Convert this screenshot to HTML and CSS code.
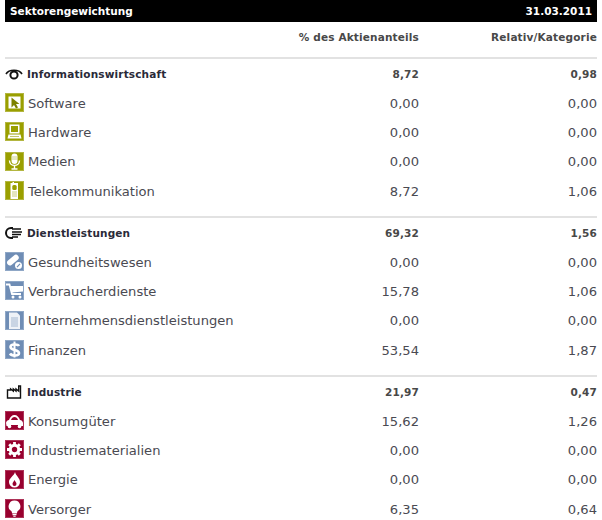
FILE: index.html
```html
<!DOCTYPE html>
<html lang="de">
<head>
<meta charset="utf-8">
<title>Sektorengewichtung</title>
<link rel="stylesheet" href="styles.css">
</head>
<body>
<svg width="0" height="0" class="defs">
  <symbol id="i-software" viewBox="0 0 19 19"><path d="M3.500 3.500h12v12h-12z" fill="#fff"/><path d="M6.500 4.500v10l2.500-2.500 2 3.500 2-1-2-3.500h3.500z" fill="#7d8100"/></symbol>
  <symbol id="i-hardware" viewBox="0 0 19 19"><path d="M4.500 2.500h10v9h-10z" fill="#fff"/><path d="M6 4h7v6H6z" fill="#9a9f00"/><path d="M3.500 12.500h12l1 4h-14z" fill="#fff"/><path d="M5 14.500h9" stroke="#c3c66a"/></symbol>
  <symbol id="i-medien" viewBox="0 0 19 19"><rect x="6.500" y="1.500" width="6" height="10.500" rx="3" fill="#fff"/><path d="M7 5h5M7 7h5" stroke="#c3c66a" stroke-width=".8"/><path d="M4.500 8.500c0 6.500 10 6.500 10 0M9.500 13.500v3M6.500 17h6" stroke="#fff" stroke-width="1.400" fill="none"/></symbol>
  <symbol id="i-telekom" viewBox="0 0 19 19"><path d="M5.500 2h2V1h1.500v1h4v16h-7.500z" fill="#fff"/><rect x="7.300" y="4" width="4.400" height="5" rx="1.500" fill="#9a9f00"/><path d="M7 11h5M7 13h5M7 15h5" stroke="#c9cc80"/></symbol>
  <symbol id="i-gesund" viewBox="0 0 19 19"><path d="M3 8.500l6-5a2.800 2.800 0 0 1 3.800 4.200l-6 5a2.800 2.800 0 0 1-3.800-4.200z" fill="#fff"/><circle cx="13.500" cy="13.500" r="3.500" fill="#fff"/><path d="M12 15.200l3-3.400" stroke="#6f8db5" stroke-width="1.200"/></symbol>
  <symbol id="i-verbraucher" viewBox="0 0 19 19"><path d="M1 3.500h3.500l2.500 9.500h9" stroke="#fff" stroke-width="1.800" fill="none"/><path d="M5.500 5h12.500v5.500l-11 1z" fill="#fff"/><circle cx="8" cy="16" r="1.500" fill="#fff"/><circle cx="15" cy="16" r="1.500" fill="#fff"/></symbol>
  <symbol id="i-unternehmen" viewBox="0 0 19 19"><path d="M4 1.500h8l3 3v13.500h-11z" fill="#eef2f7"/><path d="M6 7h7M6 9h7M6 11h7M6 13h7M6 15h7" stroke="#a3b7d0"/></symbol>
  <symbol id="i-finanzen" viewBox="0 0 19 19"><path d="M14 6c-1-2-8.500-2.500-8.500 1s8.500 2.500 8.500 6-7.500 3-9 .5" stroke="#fff" stroke-width="2.600" fill="none"/><path d="M9.500 1.500v16" stroke="#fff" stroke-width="2"/></symbol>
  <symbol id="i-konsum" viewBox="0 0 19 19"><path d="M1 12c0-1.500 1.500-3 3-3 1-3 3-5 5.500-5s4.500 2 5.500 5c1.500 0 3 1.500 3 3v3h-16.500z" fill="#fff"/><path d="M6 9c.5-2 2-3 3.500-3s3 1 3.500 3z" fill="#98002e"/><path d="M6 14.500h7" stroke="#98002e"/><circle cx="4.500" cy="15.500" r="1.800" fill="#fff"/><circle cx="14.500" cy="15.500" r="1.800" fill="#fff"/></symbol>
  <symbol id="i-industriemat" viewBox="0 0 19 19"><circle cx="9.500" cy="9.500" r="4.200" fill="none" stroke="#fff" stroke-width="3"/><path d="M9.500 2v3M9.500 14v3M2 9.500h3M14 9.500h3M4.200 4.200l2 2M12.800 12.800l2 2M14.800 4.200l-2 2M6.200 12.800l-2 2" stroke="#fff" stroke-width="2.800"/></symbol>
  <symbol id="i-energie" viewBox="0 0 19 19"><path d="M10 2c1 4 5 6 5 10a5.500 5.500 0 0 1-11 0c0-4 5-6 6-10z" fill="#fff"/><path d="M9.500 10c-1 2-2 2.500-2 4a2 2 0 0 0 4 0c0-1.500-1-2-2-4z" fill="#98002e"/></symbol>
  <symbol id="i-versorger" viewBox="0 0 19 19"><path d="M9.500 1.500a5.800 5.800 0 0 1 3 10.800l-.7 2.200h-4.600l-.7-2.200a5.800 5.800 0 0 1 3-10.800z" fill="#fff"/><path d="M7.500 15h4v1.200h-4zM8.300 16.700h2.400v1h-2.400z" fill="#fff"/></symbol>
</svg>

<main class="panel">
  <div class="titlebar"><span>Sektorengewichtung</span><span>31.03.2011</span></div>
  <div class="columns"><span></span><span>% des Aktienanteils</span><span>Relativ/Kategorie</span></div>

  <section class="group olive">
    <div class="row head">
      <span class="label"><svg class="head-icon" viewBox="0 0 18 14"><path d="M1 7c3-5 13-5 16 0" fill="none" stroke="#111" stroke-width="1.600"/><circle cx="9" cy="8" r="3.600" fill="none" stroke="#111" stroke-width="2"/></svg>Informationswirtschaft</span>
      <span>8,72</span><span>0,98</span>
    </div>
    <div class="row"><span class="label"><span class="tile"><svg><use href="#i-software"/></svg></span>Software</span><span>0,00</span><span>0,00</span></div>
    <div class="row"><span class="label"><span class="tile"><svg><use href="#i-hardware"/></svg></span>Hardware</span><span>0,00</span><span>0,00</span></div>
    <div class="row"><span class="label"><span class="tile"><svg><use href="#i-medien"/></svg></span>Medien</span><span>0,00</span><span>0,00</span></div>
    <div class="row"><span class="label"><span class="tile"><svg><use href="#i-telekom"/></svg></span>Telekommunikation</span><span>8,72</span><span>1,06</span></div>
  </section>

  <section class="group steel">
    <div class="row head">
      <span class="label"><svg class="head-icon" viewBox="0 0 18 14"><path d="M8 2H6a5 5 0 0 0 0 10h2" fill="none" stroke="#111" stroke-width="2"/><path d="M7 3h9M7 6h10M7 8.500h9M7 11h6" stroke="#111" stroke-width="1.400"/></svg>Dienstleistungen</span>
      <span>69,32</span><span>1,56</span>
    </div>
    <div class="row"><span class="label"><span class="tile"><svg><use href="#i-gesund"/></svg></span>Gesundheitswesen</span><span>0,00</span><span>0,00</span></div>
    <div class="row"><span class="label"><span class="tile"><svg><use href="#i-verbraucher"/></svg></span>Verbraucherdienste</span><span>15,78</span><span>1,06</span></div>
    <div class="row"><span class="label"><span class="tile"><svg><use href="#i-unternehmen"/></svg></span>Unternehmensdienstleistungen</span><span>0,00</span><span>0,00</span></div>
    <div class="row"><span class="label"><span class="tile"><svg><use href="#i-finanzen"/></svg></span>Finanzen</span><span>53,54</span><span>1,87</span></div>
  </section>

  <section class="group wine">
    <div class="row head">
      <span class="label"><svg class="head-icon" viewBox="0 0 18 14"><path d="M2.500 5v8h13V1h-1.800v5l-2.700-2v2l-2.700-2v2l-2.700-2v1z" fill="none" stroke="#111" stroke-width="1.400"/></svg>Industrie</span>
      <span>21,97</span><span>0,47</span>
    </div>
    <div class="row"><span class="label"><span class="tile"><svg><use href="#i-konsum"/></svg></span>Konsumgüter</span><span>15,62</span><span>1,26</span></div>
    <div class="row"><span class="label"><span class="tile"><svg><use href="#i-industriemat"/></svg></span>Industriematerialien</span><span>0,00</span><span>0,00</span></div>
    <div class="row"><span class="label"><span class="tile"><svg><use href="#i-energie"/></svg></span>Energie</span><span>0,00</span><span>0,00</span></div>
    <div class="row"><span class="label"><span class="tile"><svg><use href="#i-versorger"/></svg></span>Versorger</span><span>6,35</span><span>0,64</span></div>
  </section>
</main>
</body>
</html>
```
FILE: styles.css
```css
html, body {
  margin: 0;
  padding: 0;
  background: #fff;
}
body {
  font-family: "DejaVu Sans", Verdana, sans-serif;
  color: #4a4a52;
}
.defs {
  position: absolute;
}
.panel {
  width: 592px;
  margin-left: 5px;
  overflow: hidden;
}
.titlebar {
  height: 22px;
  background: #000;
  color: #fff;
  font-size: 10.5px;
  font-weight: bold;
  display: flex;
  justify-content: space-between;
  align-items: center;
  padding: 0 5px;
}
.columns, .row {
  display: grid;
  grid-template-columns: 1fr 160px 178px;
  align-items: center;
  text-align: right;
}
.columns {
  height: 35px;
  font-size: 10.5px;
  font-weight: bold;
  color: #484848;
  padding-bottom: 6px;
  box-sizing: border-box;
  letter-spacing: 0.16px;
}
.group {
  border-top: 2px solid #e2e2e2;
  height: 159px;
  box-sizing: border-box;
}
.row {
  height: 29.3px;
  font-size: 13.1px;
  box-sizing: border-box;
  padding-top: 1px;
}
.row.head {
  height: 29px;
  padding-top: 0;
  font-size: 10.5px;
  font-weight: bold;
  color: #484848;
  letter-spacing: 0.15px;
}
.label {
  display: flex;
  align-items: center;
  text-align: left;
}
.head .label {
  color: #2a2a38;
}
.head-icon {
  width: 18px;
  height: 14px;
  margin-right: 4px;
}
.tile {
  width: 19px;
  height: 19px;
  margin-right: 4px;
  margin-bottom: 1px;
  display: block;
}
.tile svg {
  width: 19px;
  height: 19px;
  display: block;
}
.olive .tile { background: #9a9f00; box-shadow: inset 0 0 0 1px #b3b640; }
.steel .tile { background: #6f8db5; box-shadow: inset 0 0 0 1px #8fa7c6; }
.wine .tile { background: #98002e; box-shadow: inset 0 0 0 1px #ad3358; }
```
